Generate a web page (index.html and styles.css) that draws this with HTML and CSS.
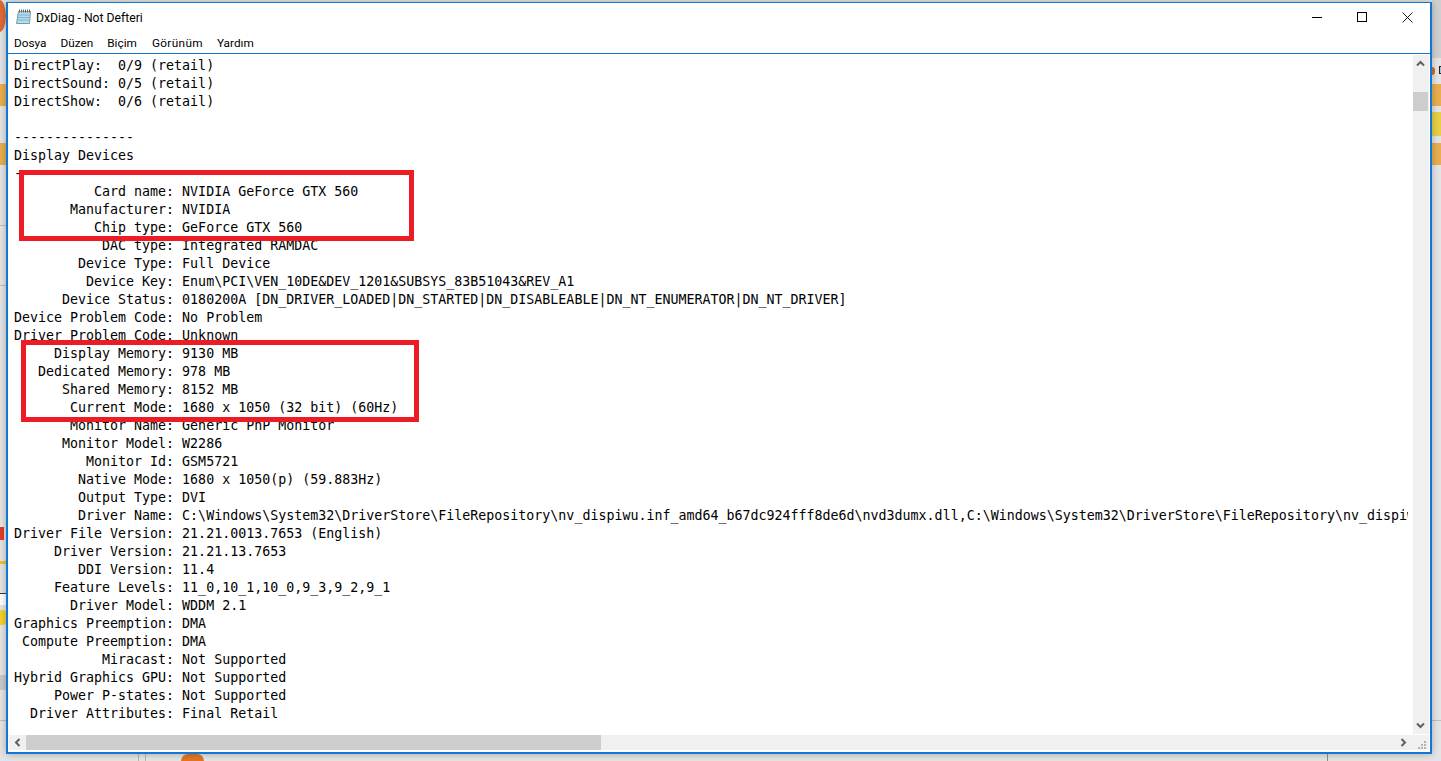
FILE: index.html
```html
<!DOCTYPE html>
<html lang="tr">
<head>
<meta charset="utf-8">
<title>DxDiag - Not Defteri</title>
<link rel="stylesheet" href="styles.css">
</head>
<body>
<div class="desktop">
  <div class="bg-shape bg-orange-logo"></div>
  <div class="bg-shape bg-left-a"></div>
  <div class="bg-shape bg-left-b"></div>
  <div class="bg-shape bg-left-c"></div>
  <div class="bg-shape bg-left-box"></div>
  <div class="bg-shape bg-left-grey"></div>
  <div class="bg-shape bg-line bg-line-a"></div>
  <div class="bg-shape bg-line bg-line-b"></div>
  <div class="bg-shape bg-line bg-line-c"></div>
  <div class="bg-shape bg-line bg-line-d"></div>
  <div class="bg-shape bg-right-top"></div>
  <div class="bg-shape bg-right-a"></div>
  <div class="bg-shape bg-right-b"></div>
  <div class="bg-shape bg-right-c"></div>
  <div class="bg-shape bg-right-icon"></div>
  <div class="bg-shape bg-right-dot"></div>
  <div class="bg-shape bg-red"></div>
  <div class="bg-shape bg-yellow"></div>
  <div class="bg-shape bg-bottom-logo"></div>
  <div class="bg-shape bg-vline bg-vline-a"></div>
  <div class="bg-shape bg-vline bg-vline-b"></div>
  <div class="bg-shape bg-vline bg-vline-c"></div>

  <main class="window">
    <header class="titlebar">
      <svg class="app-icon" width="16" height="16" viewBox="0 0 16 16">
        <path d="M2.5 2.5h12l-1 12H.5z" fill="#b4dcec" stroke="#7d98a5"/>
        <path d="M1.7 6h11.9M1.4 8.5h12M1.1 11h12" stroke="#7db3cc"/>
        <path d="M3.5 .5v3M5.5 .5v3M7.5 .5v3M9.5 .5v3M11.5 .5v3M13.5 .5v3" stroke="#666"/>
      </svg>
      <span class="title">DxDiag - Not Defteri</span>
      <div class="controls">
        <span class="ctrl"><svg width="11" height="11" viewBox="0 0 11 11"><path d="M0 5.5h10" stroke="#000"/></svg></span>
        <span class="ctrl"><svg width="11" height="11" viewBox="0 0 11 11"><rect x=".5" y=".5" width="9" height="9" fill="none" stroke="#000"/></svg></span>
        <span class="ctrl"><svg width="11" height="11" viewBox="0 0 11 11"><path d="M.5.5l10 10M10.5.5l-10 10" stroke="#000" stroke-width=".9"/></svg></span>
      </div>
    </header>
    <nav class="menubar">
      <span>Dosya</span><span>Düzen</span><span>Biçim</span><span class="wide">Görünüm</span><span>Yardım</span>
    </nav>
    <section class="editor">
      <div class="text-row">
<pre class="text">DirectPlay:  0/9 (retail)
DirectSound: 0/5 (retail)
DirectShow:  0/6 (retail)

---------------
Display Devices
---------------
          Card name: NVIDIA GeForce GTX 560
       Manufacturer: NVIDIA
          Chip type: GeForce GTX 560
           DAC type: Integrated RAMDAC
        Device Type: Full Device
         Device Key: Enum\PCI\VEN_10DE&amp;DEV_1201&amp;SUBSYS_83B51043&amp;REV_A1
      Device Status: 0180200A [DN_DRIVER_LOADED|DN_STARTED|DN_DISABLEABLE|DN_NT_ENUMERATOR|DN_NT_DRIVER]
Device Problem Code: No Problem
Driver Problem Code: Unknown
     Display Memory: 9130 MB
   Dedicated Memory: 978 MB
      Shared Memory: 8152 MB
       Current Mode: 1680 x 1050 (32 bit) (60Hz)
       Monitor Name: Generic PnP Monitor
      Monitor Model: W2286
         Monitor Id: GSM5721
        Native Mode: 1680 x 1050(p) (59.883Hz)
        Output Type: DVI
        Driver Name: C:\Windows\System32\DriverStore\FileRepository\nv_dispiwu.inf_amd64_b67dc924fff8de6d\nvd3dumx.dll,C:\Windows\System32\DriverStore\FileRepository\nv_dispiw
Driver File Version: 21.21.0013.7653 (English)
     Driver Version: 21.21.13.7653
        DDI Version: 11.4
     Feature Levels: 11_0,10_1,10_0,9_3,9_2,9_1
       Driver Model: WDDM 2.1
Graphics Preemption: DMA
 Compute Preemption: DMA
           Miracast: Not Supported
Hybrid Graphics GPU: Not Supported
     Power P-states: Not Supported
  Driver Attributes: Final Retail</pre>
        <div class="vscroll">
          <button class="arrow"><svg width="9" height="7" viewBox="0 0 9 7"><path d="M1 5.5l3.5-3.5 3.5 3.5" fill="none" stroke="#606060" stroke-width="2"/></svg></button>
          <div class="v-track"><div class="v-thumb"></div></div>
          <button class="arrow"><svg width="9" height="7" viewBox="0 0 9 7"><path d="M1 1.5l3.5 3.5 3.5-3.5" fill="none" stroke="#606060" stroke-width="2"/></svg></button>
        </div>
      </div>
      <div class="hscroll">
        <button class="arrow h"><svg width="7" height="9" viewBox="0 0 7 9"><path d="M5.5 1L2 4.5 5.5 8" fill="none" stroke="#606060" stroke-width="2"/></svg></button>
        <div class="h-track"><div class="h-thumb"></div></div>
        <button class="arrow h"><svg width="7" height="9" viewBox="0 0 7 9"><path d="M1.5 1L5 4.5 1.5 8" fill="none" stroke="#606060" stroke-width="2"/></svg></button>
        <div class="grip"><svg width="8" height="8" viewBox="0 0 8 8"><path d="M6 0h2v2H6zM3 3h2v2H3zM6 3h2v2H6zM0 6h2v2H0zM3 6h2v2H3zM6 6h2v2H6z" fill="#b4b4b4"/></svg></div>
      </div>
    </section>
    <div class="mark mark-one"></div>
    <div class="mark mark-two"></div>
  </main>
</div>
</body>
</html>
```
FILE: styles.css
```css
* { box-sizing: border-box; }
html, body { margin: 0; height: 100%; overflow: hidden; }
.desktop { position: relative; width: 1441px; height: 761px; background: #e4e4e4; overflow: hidden; }
.bg-shape { position: absolute; }
.bg-orange-logo { left: -7px; top: 0; width: 13px; height: 32px; border-radius: 50%; background: #dd6a34; }
.bg-left-a { left: 0; top: 84px; width: 6px; height: 22px; background: #e8ae4e; }
.bg-left-b { left: 0; top: 143px; width: 6px; height: 22px; background: #e8ae4e; }
.bg-left-c { left: 0; top: 610px; width: 6px; height: 15px; background: #f2d22c; border-radius: 0 3px 3px 0; }
.bg-left-box { left: 0; top: 593px; width: 6px; height: 12px; background: #fff; border-top: 1px solid #333; }
.bg-left-grey { left: 0; top: 675px; width: 6px; height: 15px; background: #c9c9c9; }
.bg-line { left: 0; width: 6px; height: 1px; background: #bdbdbd; }
.bg-line-a { top: 225px; }
.bg-line-b { top: 285px; }
.bg-line-c { top: 720px; }
.bg-line-d { top: 720px; left: 1432px; width: 9px; }
.bg-right-top { left: 1432px; top: 0; width: 9px; height: 58px; background: #cfcfcf; }
.bg-right-a { left: 1432px; top: 84px; width: 9px; height: 22px; background: #e8ae4e; }
.bg-right-b { left: 1432px; top: 112px; width: 9px; height: 24px; background: #e8cf44; }
.bg-right-c { left: 1432px; top: 143px; width: 9px; height: 22px; background: #e8ae4e; }
.bg-right-icon { left: 1439px; top: 66px; width: 2px; height: 8px; background: #8ecbe0; border: 1px solid #3a1010; border-right: 0; }
.bg-right-dot { left: 1432px; top: 67px; width: 3px; height: 8px; background: #d9682f; border-radius: 0 4px 4px 0; }
.bg-red { left: 0; top: 527px; width: 4px; height: 13px; background: #e23a2a; }
.bg-yellow { left: 0; top: 561px; width: 6px; height: 3px; background: #e6c62c; }
.bg-bottom-logo { left: 181px; top: 754px; width: 23px; height: 7px; background: #dd762c; border-radius: 8px 8px 0 0; }
.bg-vline { top: 754px; width: 1px; height: 7px; background: #b5b5b5; }
.bg-vline-a { left: 138px; }
.bg-vline-b { left: 145px; }
.bg-vline-c { left: 1327px; background: #8d8d8d; }

.window { position: absolute; left: 6px; top: 2px; width: 1426px; height: 752px; background: #fff; border: 2px solid #0f78d4; border-top-width: 1px; display: flex; flex-direction: column; font-family: Roboto, "Noto Sans", sans-serif; color: #000; box-shadow: 0 0 7px rgba(0,0,0,.28); }
.titlebar { height: 28px; display: flex; align-items: center; padding-left: 8px; flex: none; }
.app-icon { flex: none; margin-right: 4px; }
.title { font-size: 12.2px; line-height: 16px; padding-top: 2px; }
.controls { margin-left: auto; display: flex; height: 100%; }
.ctrl { width: 45px; display: flex; align-items: center; justify-content: center; }
.menubar { height: 23px; flex: none; display: flex; align-items: center; gap: 14px; padding: 2px 0 0 6px; font-size: 11.8px; border-bottom: 1px solid #0f78d4; }
.menubar .wide { letter-spacing: .35px; margin-left: 1px; }
.editor { flex: 1; min-height: 0; display: flex; flex-direction: column; padding: 1px 1px 2px 1px; }
.text-row { flex: 1; min-height: 0; display: flex; }
.text { flex: 1; min-width: 0; margin: 0 5px 0 0; padding: 2px 0 0 5px; overflow: hidden; font-family: "DejaVu Sans Mono", "Liberation Mono", monospace; font-size: 13.3px; line-height: 18px; color: #000; white-space: pre; }
.vscroll { width: 16px; flex: none; background: #f0f0f0; display: flex; flex-direction: column; }
.arrow { flex: none; width: 15px; height: 17px; padding: 0; border: 0; background: #f0f0f0; display: flex; align-items: center; justify-content: center; }
.arrow.h { width: 17px; height: 15px; }
.v-track { flex: 1; padding-top: 20px; }
.v-thumb { height: 19px; width: 15px; background: #cdcdcd; }
.hscroll { height: 15px; flex: none; display: flex; background: #f0f0f0; margin-top: 1px; }
.h-track { flex: 1; }
.h-thumb { width: 575px; height: 100%; background: #cdcdcd; }
.grip { width: 17px; display: flex; align-items: flex-end; justify-content: flex-end; padding: 0 3px 1px 0; }

.mark { position: absolute; border: 5px solid #ed1c24; }
.mark-one { left: 11px; top: 167px; width: 395px; height: 71px; }
.mark-two { left: 13px; top: 337px; width: 398px; height: 82px; }
```
